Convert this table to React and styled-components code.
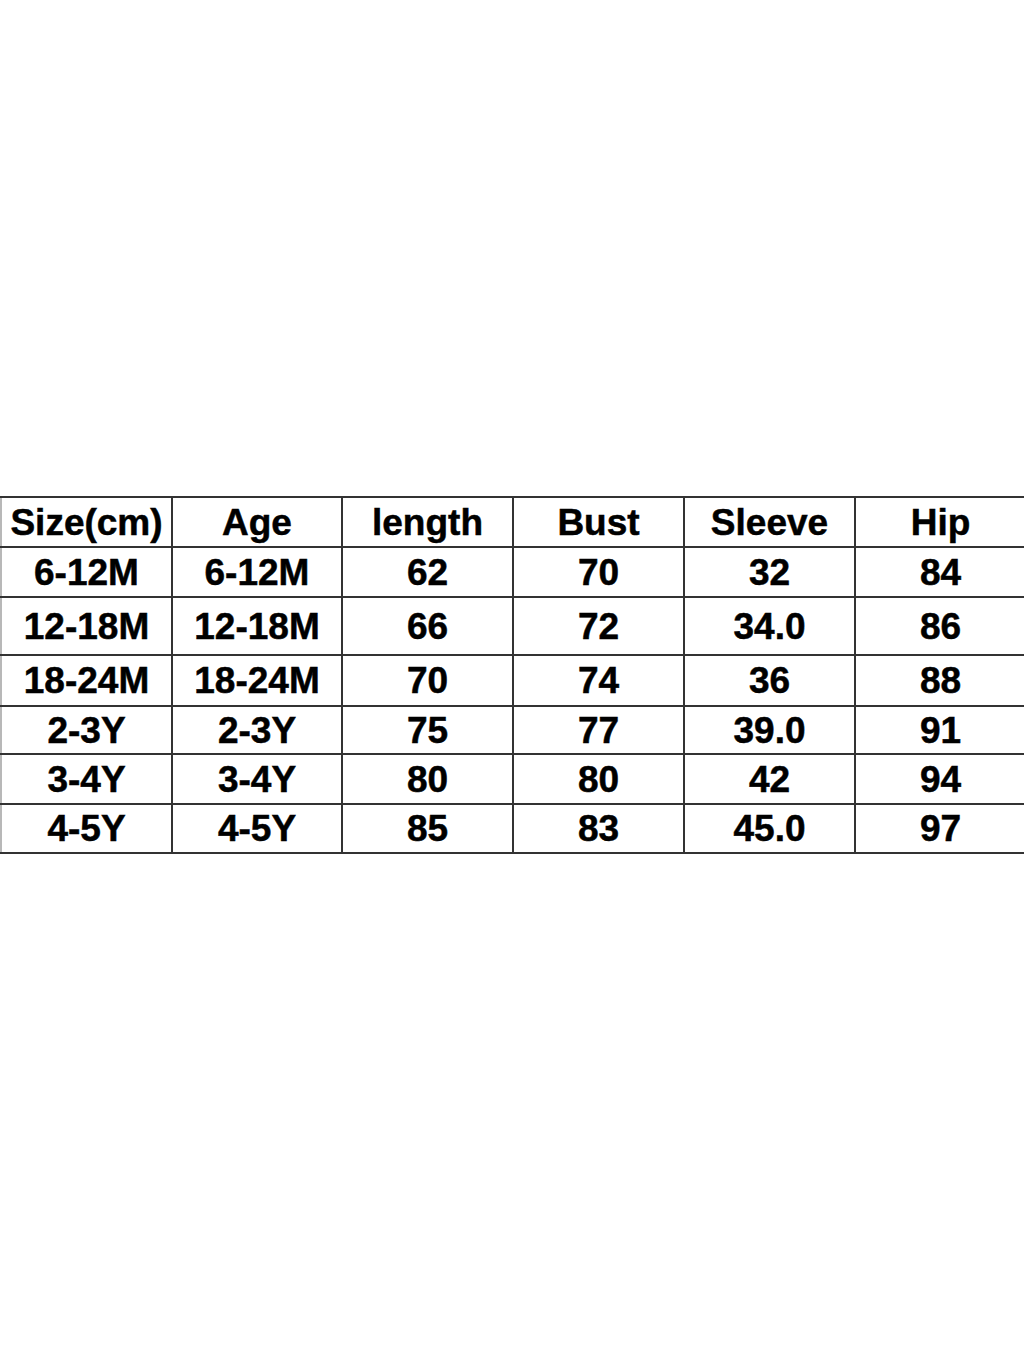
import React from "react";
import styled, { createGlobalStyle } from "styled-components";

const GlobalStyle = createGlobalStyle`
  body {
    margin: 0;
    background: #fff;
  }
`;

const Page = styled.div`
  width: 1024px;
  height: 1365px;
  padding-top: 496px;
  box-sizing: border-box;
  background: #fff;
  font-family: "Liberation Sans", Arial, sans-serif;
`;

const Table = styled.table`
  width: 1024px;
  border-collapse: collapse;
  table-layout: fixed;
`;

const Cell = styled.td`
  border: 2px solid #333;
  border-right-width: ${(p) => (p.$last ? 0 : 2)}px;
  border-left-color: ${(p) => (p.$first ? "#b8b8b8" : "#333")};
  height: ${(p) => p.$h}px;
  padding: 0;
  text-align: center;
  vertical-align: middle;
  font-size: 37px;
  font-weight: bold;
  color: #000;
  line-height: 1;
  white-space: nowrap;
  -webkit-text-stroke: 0.5px #000;
`;

const widths = [171, 170, 171, 171, 171, 170];
const heights = [48, 48, 56, 49, 46, 48, 47];

const rows = [
  ["Size(cm)", "Age", "length", "Bust", "Sleeve", "Hip"],
  ["6-12M", "6-12M", "62", "70", "32", "84"],
  ["12-18M", "12-18M", "66", "72", "34.0", "86"],
  ["18-24M", "18-24M", "70", "74", "36", "88"],
  ["2-3Y", "2-3Y", "75", "77", "39.0", "91"],
  ["3-4Y", "3-4Y", "80", "80", "42", "94"],
  ["4-5Y", "4-5Y", "85", "83", "45.0", "97"],
];

export default function App() {
  return (
    <Page>
      <GlobalStyle />
      <Table>
        <colgroup>
          {widths.map((w, i) => (
            <col key={i} style={{ width: w }} />
          ))}
        </colgroup>
        <tbody>
          {rows.map((row, r) => (
            <tr key={r}>
              {row.map((txt, c) => (
                <Cell
                  key={c}
                  $h={heights[r]}
                  $first={c === 0}
                  $last={c === row.length - 1}
                >
                  {txt}
                </Cell>
              ))}
            </tr>
          ))}
        </tbody>
      </Table>
    </Page>
  );
}
